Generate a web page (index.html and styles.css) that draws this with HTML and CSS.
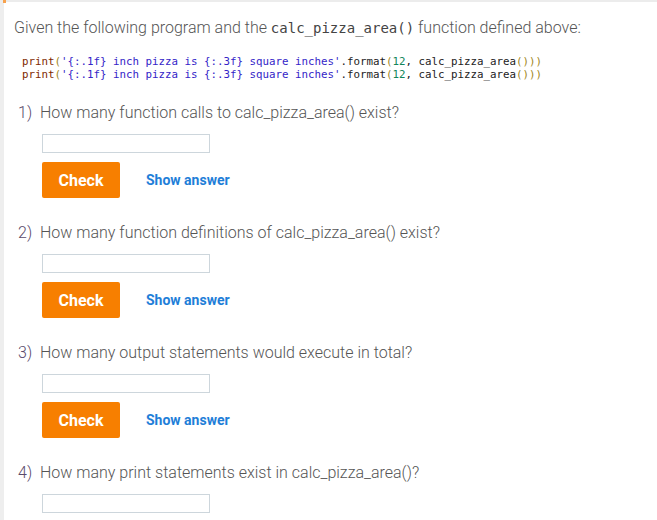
FILE: index.html
```html
<!DOCTYPE html>
<html>
<head>
<meta charset="utf-8">
<link rel="stylesheet" href="styles.css">
</head>
<body>
<div class="panel">
  <div class="corner"></div>
  <p class="intro">Given the following program and the <code class="inline">calc_pizza_area()</code> function defined above:</p>
  <pre class="code"><span class="kw">print</span><span class="par">(</span><span class="str">'{:.1f} inch pizza is {:.3f} square inches'</span>.format<span class="par">(</span><span class="num">12</span>, calc_pizza_area<span class="par">()))</span>
<span class="kw">print</span><span class="par">(</span><span class="str">'{:.1f} inch pizza is {:.3f} square inches'</span>.format<span class="par">(</span><span class="num">12</span>, calc_pizza_area<span class="par">()))</span></pre>

  <div class="question">
    <div class="q-title"><span class="q-num">1)</span><span class="q-text">How many function calls to calc_pizza_area() exist?</span></div>
    <div class="q-body">
      <input class="answer" type="text">
      <div class="actions"><button class="check">Check</button><span class="show">Show answer</span></div>
    </div>
  </div>

  <div class="question">
    <div class="q-title"><span class="q-num">2)</span><span class="q-text">How many function definitions of calc_pizza_area() exist?</span></div>
    <div class="q-body">
      <input class="answer" type="text">
      <div class="actions"><button class="check">Check</button><span class="show">Show answer</span></div>
    </div>
  </div>

  <div class="question">
    <div class="q-title"><span class="q-num">3)</span><span class="q-text">How many output statements would execute in total?</span></div>
    <div class="q-body">
      <input class="answer" type="text">
      <div class="actions"><button class="check">Check</button><span class="show">Show answer</span></div>
    </div>
  </div>

  <div class="question">
    <div class="q-title"><span class="q-num">4)</span><span class="q-text">How many print statements exist in calc_pizza_area()?</span></div>
    <div class="q-body">
      <input class="answer" type="text">
      <div class="actions"><button class="check">Check</button><span class="show">Show answer</span></div>
    </div>
  </div>
</div>
</body>
</html>
```

FILE: styles.css
```css
html, body {
  margin: 0;
  padding: 0;
  background: #fff;
  overflow: hidden;
}
body {
  font-family: Roboto, "Liberation Sans", sans-serif;
  color: #555;
}
.panel {
  position: relative;
  border-top: 2px solid #ececec;
  border-left: 4px solid #eeeeee;
  padding: 16px 0 0 10px;
  min-height: 600px;
}
.corner {
  position: absolute;
  top: -2px;
  left: -1px;
  width: 3px;
  height: 3px;
  background: #f7a24d;
}
.intro {
  margin: 0;
  font-size: 16px;
  font-weight: 300;
  line-height: 20px;
  color: #555;
}
.inline {
  font-family: "DejaVu Sans Mono", monospace;
  font-size: 14px;
  color: #444;
}
.code {
  margin: 17px 0 0 8px;
  font-family: "DejaVu Sans Mono", monospace;
  font-size: 10.8px;
  line-height: 13px;
  color: #222;
}
.kw { color: #7f2a00; }
.par { color: #a0861a; }
.str { color: #3425c8; }
.num { color: #11855a; }
.question {
  margin-top: 22px;
  margin-left: 4px;
}
.question + .question {
  margin-top: 25px;
}
.q-title {
  display: flex;
  font-size: 16px;
  font-weight: 300;
  line-height: 20px;
}
.q-num {
  width: 22px;
  color: #5a4a6a;
}
.q-body {
  padding: 11px 0 0 24px;
}
.answer {
  display: block;
  box-sizing: border-box;
  width: 168px;
  height: 19px;
  margin: 0;
  border: 1px solid #cdd6dc;
  border-radius: 0;
  padding: 0;
}
.actions {
  display: flex;
  align-items: center;
  gap: 26px;
  margin-top: 9px;
}
.check {
  width: 78px;
  height: 36px;
  border: none;
  border-radius: 2px;
  background: #f77f00;
  color: #fff;
  font-family: Roboto, sans-serif;
  font-weight: 700;
  font-size: 16px;
  padding: 0;
}
.show {
  color: #1e7ed8;
  font-weight: 700;
  font-size: 14px;
}
```
